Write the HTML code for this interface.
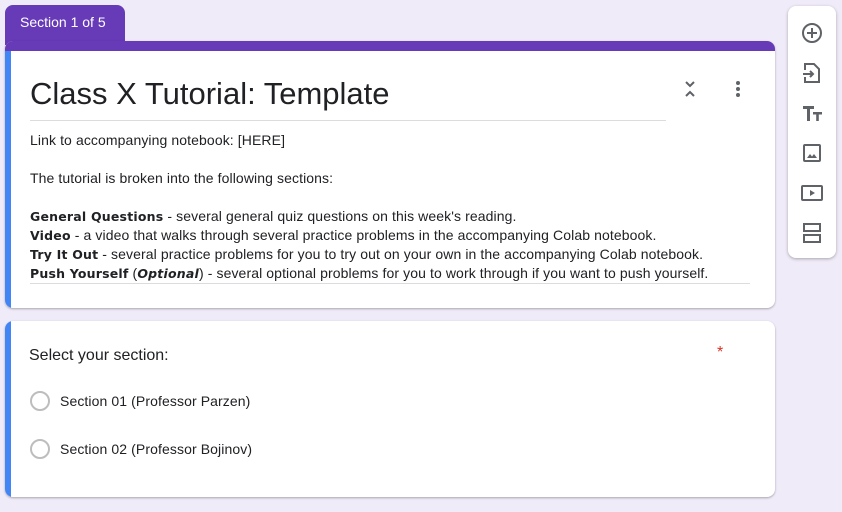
<!DOCTYPE html>
<html><head><meta charset="utf-8"><style>
*{margin:0;padding:0;box-sizing:border-box}
body{width:842px;height:512px;background:#f0ebf8;font-family:"Liberation Sans",sans-serif;color:#202124;position:relative;overflow:hidden}
.tab{position:absolute;left:5px;top:5px;width:120px;height:40px;background:#673ab7;border-radius:8px 8px 0 0;color:#fff;font-size:14px;padding:9px 0 0 15px}
.card{position:absolute;background:#fff;border-radius:8px;overflow:hidden;box-shadow:0 1px 2px rgba(0,0,0,.3)}
.c1{left:5px;top:41px;width:770px;height:267px}
.c1 .top{position:absolute;left:0;top:0;right:0;height:10px;background:#673ab7}
.stripe{position:absolute;left:0;top:0;bottom:0;width:6px;background:#4285f4}
.c1 .stripe{top:10px}
.abs{position:absolute;white-space:nowrap}
.t{font-size:14px;line-height:19px;letter-spacing:.1px}
b.d{font-family:"DejaVu Sans",sans-serif;font-size:12.5px;font-weight:bold;letter-spacing:.2px}
i.d{font-family:"DejaVu Sans",sans-serif;font-size:12.5px;font-weight:bold;font-style:italic;letter-spacing:.2px}
.c2{left:5px;top:321px;width:770px;height:176px}
.radio{position:absolute;width:20px;height:20px;border:2px solid #bdbdbd;border-radius:50%}
.side{position:absolute;left:788px;top:6px;width:48px;height:252px;background:#fff;border-radius:8px;box-shadow:0 1px 3px rgba(0,0,0,.3)}
.side svg{position:absolute;left:12px}
</style></head><body>
<div class="tab">Section 1 of 5</div>
<div class="card c1"><div class="stripe"></div><div class="top"></div>
<div class="abs" style="left:25px;top:33px;font-size:31px;line-height:40px">Class X Tutorial: Template</div>
<div class="abs" style="left:25px;top:79px;width:636px;height:1px;background:#dadce0"></div>
<svg class="abs" style="left:675px;top:38px" width="20" height="20" viewBox="0 0 20 20"><path d="M6 3l4 4 4-4M6 17l4-4 4 4" fill="none" stroke="#5f6368" stroke-width="2"/></svg>
<svg class="abs" style="left:723px;top:38px" width="20" height="20" viewBox="0 0 20 20"><circle cx="10" cy="4" r="2" fill="#5f6368"/><circle cx="10" cy="10" r="2" fill="#5f6368"/><circle cx="10" cy="16" r="2" fill="#5f6368"/></svg>
<div class="abs t" style="left:25px;top:90px">Link to accompanying notebook: [HERE]</div>
<div class="abs t" style="left:25px;top:128px">The tutorial is broken into the following sections:</div>
<div class="abs t" style="left:25px;top:166px"><b class="d">General Questions</b> - several general quiz questions on this week's reading.<br><b class="d">Video</b> - a video that walks through several practice problems in the accompanying Colab notebook.<br><b class="d">Try It Out</b> - several practice problems for you to try out on your own in the accompanying Colab notebook.<br><b class="d">Push Yourself</b> (<i class="d">Optional</i>) - several optional problems for you to work through if you want to push yourself.</div>
<div class="abs" style="left:25px;top:242px;width:720px;height:1px;background:#dadce0"></div>
</div>
<div class="card c2"><div class="stripe"></div>
<div class="abs" style="left:24px;top:26px;font-size:16px">Select your section:</div>
<div class="abs" style="left:712px;top:23px;font-size:16px;color:#d93025">*</div>
<div class="radio" style="left:25px;top:70px"></div>
<div class="abs t" style="left:55px;top:71px">Section 01 (Professor Parzen)</div>
<div class="radio" style="left:25px;top:118px"></div>
<div class="abs t" style="left:55px;top:119px">Section 02 (Professor Bojinov)</div>
</div>
<div class="side">
<svg style="top:15px" width="24" height="24" viewBox="0 0 24 24"><circle cx="12" cy="12" r="9" fill="none" stroke="#5f6368" stroke-width="2"/><path d="M12 7v10M7 12h10" stroke="#5f6368" stroke-width="2"/></svg>
<svg style="top:55px" width="24" height="24" viewBox="0 0 24 24"><path d="M5 9V3h9l5 5v13H5v-5" fill="none" stroke="#5f6368" stroke-width="2"/><path d="M3 13h10M10 10l3 3-3 3" fill="none" stroke="#5f6368" stroke-width="2"/></svg>
<svg style="top:95px" width="24" height="24" viewBox="0 0 24 24"><path d="M3 5h11v3H10v12H7V8H3zM13 11h9v2.5h-3.2V20h-2.6v-6.5H13z" fill="#5f6368"/></svg>
<svg style="top:135px" width="24" height="24" viewBox="0 0 24 24"><rect x="4" y="4" width="16" height="16" rx="1" fill="none" stroke="#5f6368" stroke-width="2"/><path d="M7 17l3-4 2 2.5 2-2.5 3 4z" fill="#5f6368"/></svg>
<svg style="top:175px" width="24" height="24" viewBox="0 0 24 24"><rect x="2" y="5" width="20" height="14" rx="1" fill="none" stroke="#5f6368" stroke-width="2"/><path d="M10 9v6l5-3z" fill="#5f6368"/></svg>
<svg style="top:215px" width="24" height="24" viewBox="0 0 24 24"><rect x="4" y="3" width="16" height="7" fill="none" stroke="#5f6368" stroke-width="2"/><rect x="4" y="14" width="16" height="7" fill="none" stroke="#5f6368" stroke-width="2"/></svg>
</div>
</body></html>
